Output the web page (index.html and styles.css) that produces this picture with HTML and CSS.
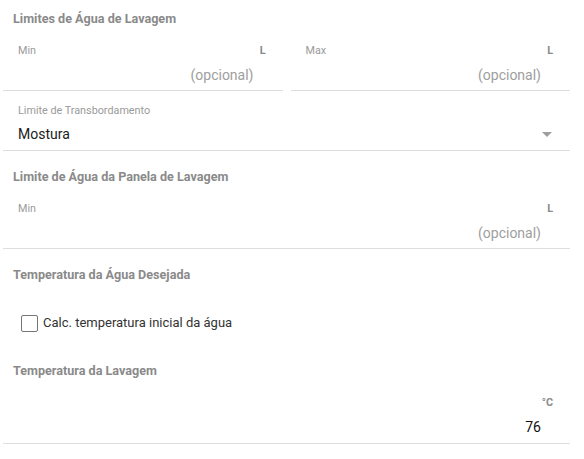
FILE: index.html
```html
<!DOCTYPE html>
<html lang="pt">

<head>
  <title>Lavagem</title>
  <meta charset="utf-8">
  <meta name="viewport" content="width=device-width, initial-scale=1">
  <link rel="stylesheet" href="styles.css">
</head>

<body>
  <div class="form">
    <h3 class="section-title first">Limites de Água de Lavagem</h3>
    <div class="row">
      <div class="field">
        <div class="field-label"><span>Min</span><span class="unit">L</span></div>
        <div class="field-input placeholder">(opcional)</div>
      </div>
      <div class="field">
        <div class="field-label"><span>Max</span><span class="unit">L</span></div>
        <div class="field-input placeholder">(opcional)</div>
      </div>
    </div>

    <div class="field select">
      <div class="field-label"><span>Limite de Transbordamento</span></div>
      <div class="field-input value-left">
        <span>Mostura</span>
        <span class="arrow"></span>
      </div>
    </div>

    <h3 class="section-title">Limite de Água da Panela de Lavagem</h3>
    <div class="field">
      <div class="field-label"><span>Min</span><span class="unit">L</span></div>
      <div class="field-input placeholder">(opcional)</div>
    </div>

    <h3 class="section-title">Temperatura da Água Desejada</h3>
    <label class="check">
      <span class="box"></span>
      <span>Calc. temperatura inicial da água</span>
    </label>

    <h3 class="section-title">Temperatura da Lavagem</h3>
    <div class="field last">
      <div class="field-label"><span></span><span class="unit">°C</span></div>
      <div class="field-input value">76</div>
    </div>
  </div>
</body>

</html>
```

FILE: styles.css
```css
body {
  margin: 0;
  background: #fff;
  font-family: Roboto, "Liberation Sans", sans-serif;
}

.form {
  padding: 0 14px 0 3px;
}

.section-title {
  margin: 18px 0 0 10px;
  font-size: 12.6px;
  line-height: 16px;
  font-weight: bold;
  color: #8a8a8a;
}

.section-title.first {
  margin-top: 11px;
}

.row {
  display: flex;
  gap: 8px;
}

.row .field {
  flex: 1;
}

.field {
  padding: 17px 0 5px;
  border-bottom: 1px solid #dedede;
}

.field.select {
  padding-top: 13px;
  padding-bottom: 6px;
}

.field.last {
  padding-bottom: 6px;
}

.field-label {
  display: flex;
  justify-content: space-between;
  padding: 0 17px 0 15px;
  font-size: 10.8px;
  line-height: 14px;
  color: #9a9a9a;
}

.field-label .unit {
  font-weight: bold;
  color: #8a8a8a;
}

.field-input {
  margin-top: 7px;
  padding: 0 29px 0 15px;
  font-size: 14px;
  line-height: 20px;
  text-align: right;
}

.select .field-input {
  margin-top: 6px;
}

.placeholder {
  color: #9e9e9e;
}

.value {
  color: #111;
}

.value-left {
  display: flex;
  justify-content: space-between;
  align-items: center;
  padding-right: 18px;
  color: #1a1a1a;
}

.arrow {
  width: 0;
  height: 0;
  border-left: 5px solid transparent;
  border-right: 5px solid transparent;
  border-top: 5px solid #9e9e9e;
}

.check {
  display: flex;
  align-items: center;
  gap: 5px;
  margin: 31px 0 31px 18px;
  font-size: 13px;
  line-height: 18px;
  color: #333;
}

.check .box {
  width: 15px;
  height: 15px;
  border: 1px solid #757575;
  border-radius: 2px;
}
```
